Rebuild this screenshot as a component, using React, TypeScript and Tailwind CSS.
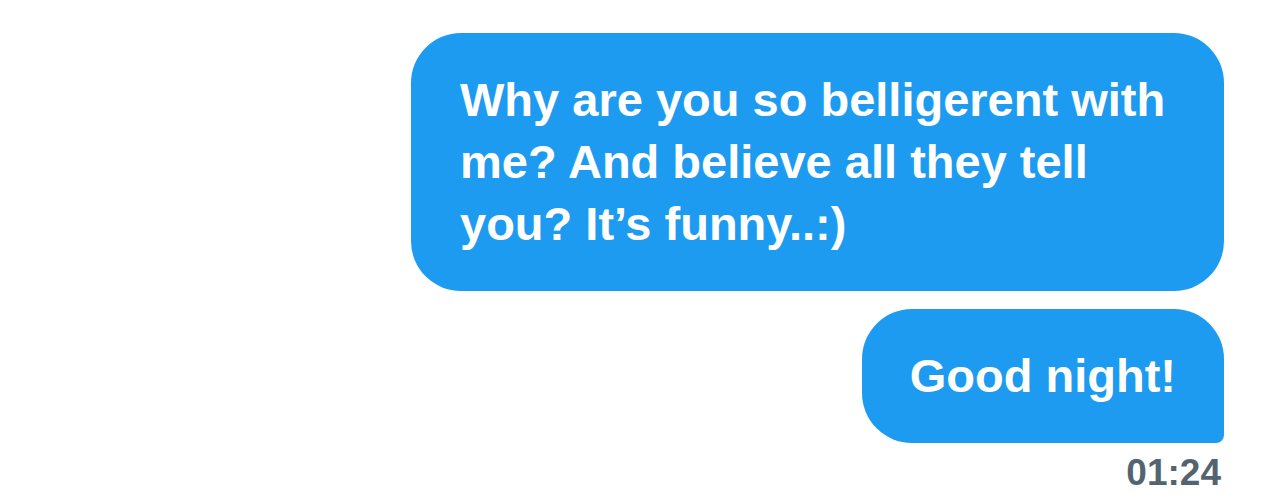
import React from 'react';

const App: React.FC = () => {
  return (
    <div className="w-[1284px] h-[501px] bg-white flex flex-col items-end pt-[33px] pr-[60px] font-['Liberation_Sans',Arial,sans-serif]">
      {/* First message */}
      <div className="w-[813px] bg-[#1d9bf0] text-white font-bold text-[47px] leading-[62px] px-[49px] py-[36px] rounded-[50px]">
        Why are you so belligerent with
        <br />
        me? And believe all they tell
        <br />
        you? It’s funny..:)
      </div>
      {/* Second message */}
      <div className="mt-[18px] bg-[#1d9bf0] text-white font-bold text-[47px] leading-[62px] px-[48px] py-[36px] rounded-[50px] rounded-br-[8px]">
        Good night!
      </div>
      <div className="mt-[8px] pr-[3px] text-[#536471] font-bold text-[37px] leading-[44px]">01:24</div>
    </div>
  );
};

export default App;
